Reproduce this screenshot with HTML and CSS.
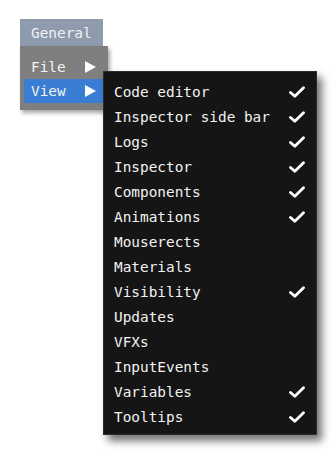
FILE: index.html
```html
<!DOCTYPE html>
<html>
<head>
<meta charset="utf-8">
<link rel="stylesheet" href="styles.css">
</head>
<body>
<div class="stage">
  <div class="tab">General</div>
  <div class="menu">
    <div class="mi"><span>File</span><span class="tri"></span></div>
    <div class="mi active"><span>View</span><span class="tri"></span></div>
  </div>
  <div class="dropdown">
    <div class="row"><span>Code editor</span><svg class="chk" viewBox="0 0 16 12"><path d="M1.5 6.5 L5.8 10.3 L14.5 1.8"/></svg></div>
    <div class="row"><span>Inspector side bar</span><svg class="chk" viewBox="0 0 16 12"><path d="M1.5 6.5 L5.8 10.3 L14.5 1.8"/></svg></div>
    <div class="row"><span>Logs</span><svg class="chk" viewBox="0 0 16 12"><path d="M1.5 6.5 L5.8 10.3 L14.5 1.8"/></svg></div>
    <div class="row"><span>Inspector</span><svg class="chk" viewBox="0 0 16 12"><path d="M1.5 6.5 L5.8 10.3 L14.5 1.8"/></svg></div>
    <div class="row"><span>Components</span><svg class="chk" viewBox="0 0 16 12"><path d="M1.5 6.5 L5.8 10.3 L14.5 1.8"/></svg></div>
    <div class="row"><span>Animations</span><svg class="chk" viewBox="0 0 16 12"><path d="M1.5 6.5 L5.8 10.3 L14.5 1.8"/></svg></div>
    <div class="row"><span>Mouserects</span></div>
    <div class="row"><span>Materials</span></div>
    <div class="row"><span>Visibility</span><svg class="chk" viewBox="0 0 16 12"><path d="M1.5 6.5 L5.8 10.3 L14.5 1.8"/></svg></div>
    <div class="row"><span>Updates</span></div>
    <div class="row"><span>VFXs</span></div>
    <div class="row"><span>InputEvents</span></div>
    <div class="row"><span>Variables</span><svg class="chk" viewBox="0 0 16 12"><path d="M1.5 6.5 L5.8 10.3 L14.5 1.8"/></svg></div>
    <div class="row"><span>Tooltips</span><svg class="chk" viewBox="0 0 16 12"><path d="M1.5 6.5 L5.8 10.3 L14.5 1.8"/></svg></div>
  </div>
</div>
</body>
</html>
```
FILE: styles.css
```css
html, body {
  margin: 0;
  padding: 0;
  background: #ffffff;
}
.stage {
  position: relative;
  width: 336px;
  height: 456px;
  padding: 19px 0 0 20px;
  box-sizing: border-box;
  font-family: "DejaVu Sans Mono", "Liberation Mono", monospace;
  font-size: 14.4px;
}
.tab {
  width: 83px;
  height: 27px;
  box-sizing: border-box;
  background: #8e9bad;
  color: #eef1f4;
  padding-left: 11px;
  display: flex;
  align-items: center;
}
.menu {
  width: 88px;
  box-sizing: border-box;
  background: #7f7f7f;
  padding: 9px 4px 7px 4px;
  box-shadow: 2px 3px 4px rgba(0,0,0,0.35);
}
.mi {
  height: 24px;
  display: flex;
  align-items: center;
  justify-content: space-between;
  padding: 0 8px 0 7px;
  color: #f2f2f2;
}
.mi.active {
  background: #3a7dd4;
}
.tri {
  width: 0;
  height: 0;
  border-top: 6.5px solid transparent;
  border-bottom: 6.5px solid transparent;
  border-left: 11px solid #ffffff;
}
.dropdown {
  position: absolute;
  left: 103px;
  top: 71px;
  width: 214px;
  height: 364px;
  box-sizing: border-box;
  background: #151515;
  border: 1px solid #2c2c2c;
  padding: 7px 11px 0 10px;
  box-shadow: 5px 6px 8px rgba(0,0,0,0.55);
  color: #f2f2f2;
}
.row {
  height: 25px;
  display: flex;
  align-items: center;
  justify-content: space-between;
}
.chk {
  width: 16px;
  height: 12px;
  fill: none;
  stroke: #ffffff;
  stroke-width: 2.8;
  stroke-linecap: round;
  stroke-linejoin: round;
}
```
